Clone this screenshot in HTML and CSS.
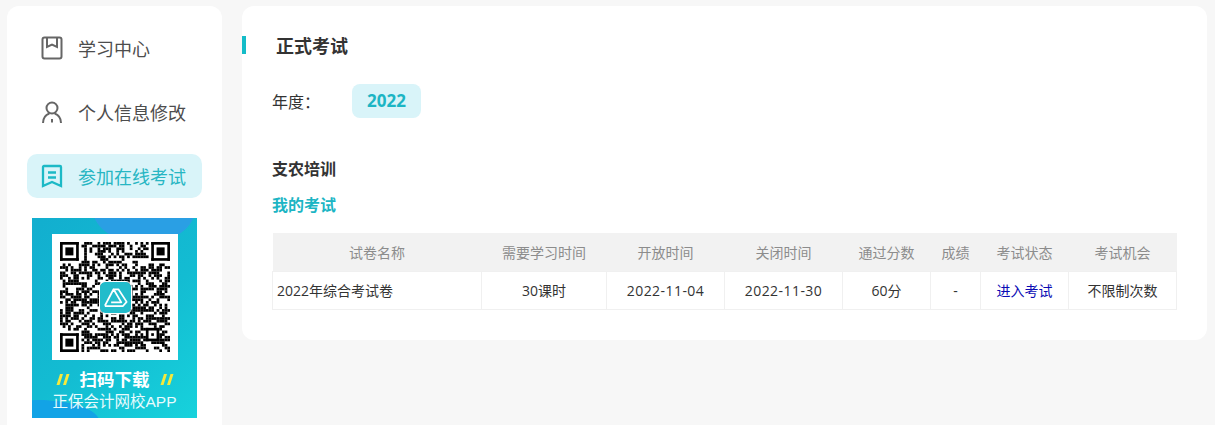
FILE: index.html
```html
<!DOCTYPE html>
<html lang="zh-CN">
<head>
<meta charset="utf-8">
<title>正式考试</title>
<link rel="stylesheet" href="styles.css">
</head>
<body>
<div class="page">
  <aside class="sidebar">
    <nav class="nav">
      <a class="nav-item">
        <svg class="nav-icon" viewBox="0 0 24 24"><rect x="2.5" y="1.5" width="19" height="21" rx="2"/><path d="M7 2v9l5-2.5L17 11V2"/></svg>
        <span>学习中心</span>
      </a>
      <a class="nav-item">
        <svg class="nav-icon" viewBox="0 0 24 24"><circle cx="12" cy="8" r="5.500"/><path d="M3 23c0-5 2.500-8 6.300-9.500M21 23c0-5-2.500-8-6.300-9.500M12 19v3.500"/></svg>
        <span>个人信息修改</span>
      </a>
      <a class="nav-item nav-item-active">
        <svg class="nav-icon nav-icon-bold" viewBox="0 0 24 24"><path d="M4 2h16a1 1 0 0 1 1 1v19l-9-4-9 4V3a1 1 0 0 1 1-1z"/><path d="M8 8.500h8M8 13.500h8"/></svg>
        <span>参加在线考试</span>
      </a>
    </nav>
    <div class="banner">
      <div class="qr-box">
        <svg id="qr" class="qr" viewBox="0 0 41 41"></svg>
        <div class="qr-logo">
          <svg viewBox="0 0 32 32"><path d="M5 24.500 14 7.500 22 21H11.500M14 7.500h5L27.500 20.500 23.500 25H5"/></svg>
        </div>
      </div>
      <div class="banner-title">
        <svg class="slashes" viewBox="0 0 14 13"><path d="M4 1h3L3.500 12H.5zM10.500 1h3L10 12H7z"/></svg>
        <b>扫码下载</b>
        <svg class="slashes" viewBox="0 0 14 13"><path d="M4 1h3L3.500 12H.5zM10.500 1h3L10 12H7z"/></svg>
      </div>
      <div class="banner-sub">正保会计网校APP</div>
    </div>
  </aside>

  <main class="content">
    <h1 class="heading">正式考试</h1>
    <div class="year-row">
      <span class="year-label">年度：</span>
      <span class="year-pill">2022</span>
    </div>
    <h2 class="project">支农培训</h2>
    <h3 class="subhead">我的考试</h3>
    <table class="exam-table">
      <colgroup>
        <col class="c-name"><col class="c-study"><col class="c-date"><col class="c-date"><col class="c-pass"><col class="c-score"><col class="c-state"><col class="c-chance">
      </colgroup>
      <thead>
        <tr><th>试卷名称</th><th>需要学习时间</th><th>开放时间</th><th>关闭时间</th><th>通过分数</th><th>成绩</th><th>考试状态</th><th>考试机会</th></tr>
      </thead>
      <tbody>
        <tr>
          <td class="cell-name">2022年综合考试卷</td>
          <td>30课时</td>
          <td class="cell-date">2022-11-04</td>
          <td class="cell-date">2022-11-30</td>
          <td>60分</td>
          <td>-</td>
          <td><a class="enter">进入考试</a></td>
          <td>不限制次数</td>
        </tr>
      </tbody>
    </table>
  </main>
</div>
<script src="app.js"></script>
</body>
</html>
```
FILE: styles.css
```css
* { box-sizing: border-box; }
html, body { margin: 0; height: 100%; }
body {
  background: #f7f7f7;
  color: #333;
  font-family: "Open Sans", "Noto Sans CJK SC", sans-serif;
  overflow: hidden;
}
.page { display: flex; align-items: flex-start; gap: 20px; padding: 6px 8px 0 7px; }

.sidebar {
  flex: 0 0 215px;
  height: 440px;
  padding: 20px 20px 0;
  background: #fff;
  border-radius: 12px;
}
.nav { display: flex; flex-direction: column; gap: 20px; }
.nav-item {
  display: flex;
  align-items: center;
  gap: 14px;
  height: 44px;
  padding-left: 13px;
  border-radius: 10px;
  font-size: 18px;
  color: #4d4d4d;
}
.nav-icon { width: 24px; height: 24px; flex: none; fill: none; stroke: #666; stroke-width: 2; }
.nav-item-active { background: #d9f4f9; color: #27b6c3; }
.nav-item-active .nav-icon { stroke: #1cb9c6; }
.nav-icon-bold { stroke-width: 2.300; }

.banner {
  width: 165px;
  height: 200px;
  margin: 20px 0 0 5px;
  padding-top: 16px;
  color: #fff;
  text-align: center;
  background:
    radial-gradient(ellipse 52px 36px at 112px -10px, #2a9fe4 0 98%, transparent 100%),
    radial-gradient(ellipse 60px 22px at 8px 204px, #12a3e6 0 98%, transparent 100%),
    linear-gradient(140deg, #12aecf 0%, #13bcd2 55%, #17d2dc 100%);
}
.qr-box {
  position: relative;
  width: 126px;
  height: 126px;
  margin: 0 auto;
  padding: 8px;
  background: #fff;
}
.qr { display: block; width: 110px; height: 110px; filter: blur(.4px); }
.qr rect { fill: #000; }
.qr-logo {
  position: absolute;
  left: 48px;
  top: 48px;
  width: 31px;
  height: 31px;
  border-radius: 5px;
  background: #22bccb;
  outline: 1px solid #fff;
}
.qr-logo svg { display: block; width: 31px; height: 31px; fill: none; stroke: #fff; stroke-width: 1.800; stroke-linejoin: round; }
.banner-title {
  display: flex;
  justify-content: center;
  align-items: center;
  gap: 10px;
  height: 26px;
  margin-top: 6px;
  font-size: 17.500px;
  line-height: 26px;
}
.slashes { width: 14px; height: 13px; flex: none; fill: #f4e93c; }
.banner-sub { font-size: 15.500px; line-height: 20px; font-family: "Liberation Sans", "Noto Sans CJK SC", sans-serif; color: #e8fbfd; }

.content {
  flex: 0 0 965px;
  height: 334px;
  padding: 30px 30px 0 0;
  background: #fff;
  border-radius: 12px;
}
.heading {
  height: 18px;
  margin: 0;
  padding-left: 30px;
  border-left: 4px solid #14bcc8;
  font-size: 18px;
  line-height: 20px;
  font-weight: 700;
  color: #333;
}
.year-row { display: flex; align-items: center; height: 34px; margin: 30px 0 0 30px; }
.year-label { width: 80px; font-size: 16px; color: #333; }
.year-pill {
  width: 69px;
  height: 34px;
  border-radius: 8px;
  background: #d9f4f9;
  color: #1cb5c4;
  font-size: 17px;
  font-weight: 700;
  line-height: 34px;
  text-align: center;
}
.project { margin: 39px 0 0 30px; font-size: 16px; line-height: 24px; font-weight: 700; color: #333; }
.subhead { margin: 12px 0 0 30px; font-size: 16px; line-height: 24px; font-weight: 700; color: #1cb5c4; }

.exam-table {
  width: 904px;
  margin: 16px 0 0 30px;
  border-collapse: collapse;
  table-layout: fixed;
  font-size: 14px;
}
.c-name { width: 209px; }
.c-study { width: 125px; }
.c-date { width: 118px; }
.c-pass { width: 88px; }
.c-score { width: 50px; }
.c-state { width: 88px; }
.c-chance { width: 108px; }
.exam-table th {
  height: 38px;
  padding: 0;
  background: #f2f2f2;
  color: #8c8c8c;
  font-weight: 400;
}
.exam-table td {
  height: 38px;
  padding: 0;
  border: 1px solid #f0f0f0;
  text-align: center;
  color: #333;
}
.exam-table td.cell-name { padding-left: 4px; text-align: left; }
.exam-table td.cell-date { letter-spacing: .45px; }
.enter { color: #0a0ab4; font-size: 14px; }
```
FILE: app.js
```js
// Fills the QR code's data modules from a fixed seed, then draws the finder marks.
(function () {
  var N = 41, svg = document.getElementById('qr'), seed = 20221104, out = '';
  function rnd() { seed = (seed * 1664525 + 1013904223) % 4294967296; return seed / 4294967296; }
  function rect(x, y, w, h) { out += '<rect x="' + x + '" y="' + y + '" width="' + w + '" height="' + h + '"/>'; }
  function reserved(x, y) {
    return (x < 8 && y < 8) || (x > N - 9 && y < 8) || (x < 8 && y > N - 9) ||
      (x > N - 10 && x < N - 4 && y > N - 10 && y < N - 4);
  }
  for (var y = 0; y < N; y++) for (var x = 0; x < N; x++) {
    if (!reserved(x, y) && rnd() < 0.55) rect(x, y, 1.02, 1.02);
  }
  function mark(x, y, size) {
    rect(x, y, size, 1); rect(x, y + size - 1, size, 1);
    rect(x, y, 1, size); rect(x + size - 1, y, 1, size);
    rect(x + 2, y + 2, size - 4, size - 4);
  }
  mark(0, 0, 7); mark(N - 7, 0, 7); mark(0, N - 7, 7); mark(N - 9, N - 9, 5);
  svg.innerHTML = out;
})();
```
